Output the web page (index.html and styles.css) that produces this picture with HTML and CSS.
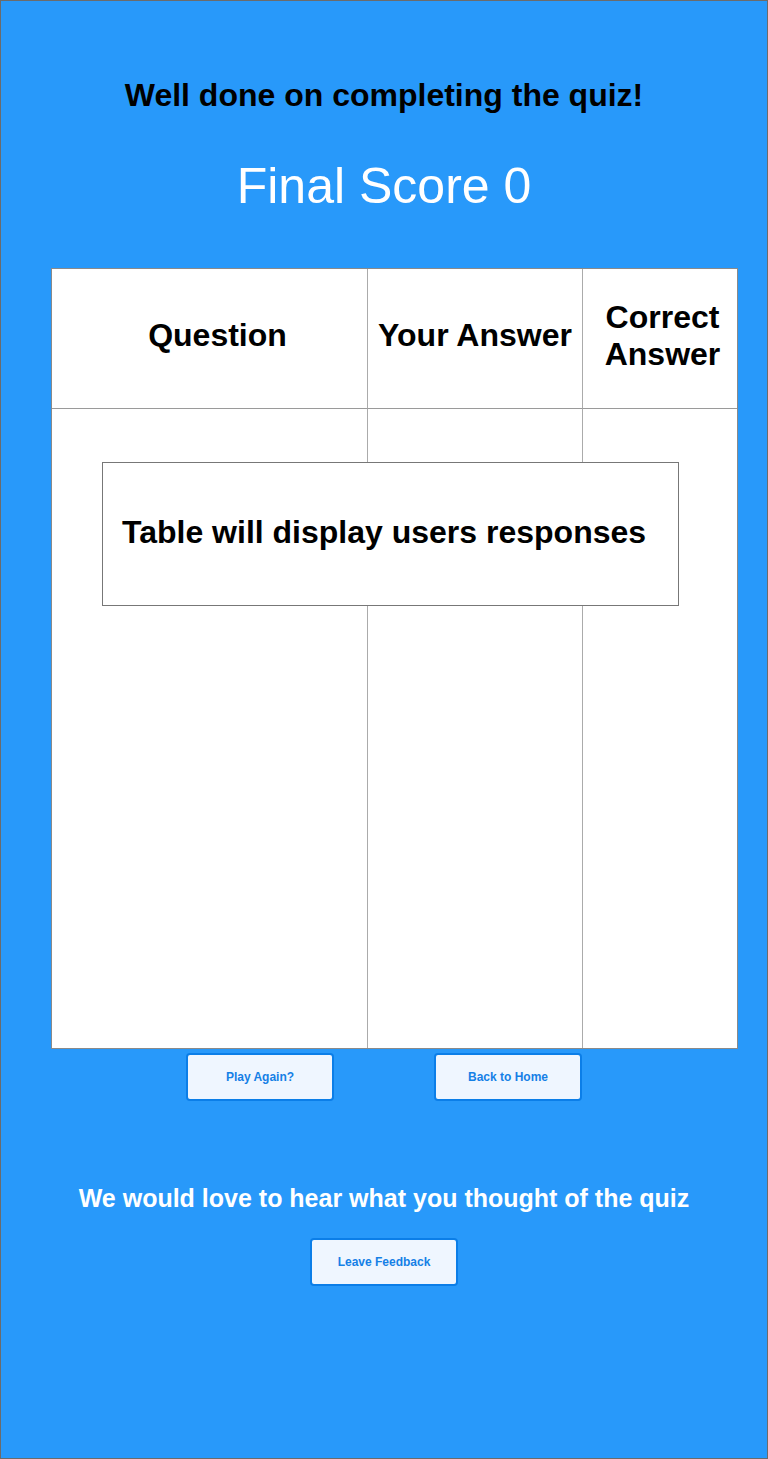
FILE: index.html
```html
<!DOCTYPE html>
<html>
<head>
    <title>Quiz Results</title>
    <link rel="stylesheet" href="styles.css">
</head>
<body>
    <div class="frame">
        <h1 class="title">Well done on completing the quiz!</h1>
        <h2 class="score">Final Score <span id="score">0</span></h2>

        <div class="results">
            <div class="cell head first">Question</div>
            <div class="cell head">Your Answer</div>
            <div class="cell head last">Correct<br>Answer</div>
            <div class="cell first"></div>
            <div class="cell"></div>
            <div class="cell"></div>

            <div class="placeholder">Table will display users responses</div>
        </div>

        <div class="actions">
            <button class="btn">Play Again?</button>
            <button class="btn">Back to Home</button>
        </div>

        <p class="feedback-text">We would love to hear what you thought of the quiz</p>
        <div class="actions">
            <button class="btn">Leave Feedback</button>
        </div>
    </div>
</body>
</html>
```

FILE: styles.css
```css
body { margin: 0; font-family: "Liberation Sans", Arial, sans-serif; }
.frame { height: 1459px; box-sizing: border-box; border: 1px solid #6b6b6b; background: #2899fa; padding-top: 76px; }
.title { margin: 0; font-size: 32px; line-height: 36px; font-weight: bold; text-align: center; color: #000; }
.score { margin: 45px 0 0; font-size: 50px; line-height: 56px; font-weight: normal; text-align: center; color: #fff; }

.results { position: relative; margin: 54px 0 0 50px; width: 687px; height: 781px; box-sizing: border-box; border: 1px solid #8a8a8a; background: #fff; display: grid; grid-template-columns: 315px 215px 155px; grid-template-rows: 140px 1fr; }
.cell { border-left: 1px solid #ababab; box-sizing: border-box; }
.cell.first { border-left: none; }
.head { border-bottom: 1px solid #9a9a9a; display: flex; align-items: center; justify-content: center; text-align: center; padding-bottom: 6px; font-size: 32px; line-height: 37px; font-weight: bold; color: #000; }
.head.first { padding-left: 16px; }
.head.last { padding-left: 5px; }

.placeholder { position: absolute; left: 50px; top: 193px; width: 577px; height: 144px; box-sizing: border-box; border: 1px solid #777; background: #fff; display: flex; align-items: center; padding: 0 0 4px 19px; font-size: 32px; font-weight: bold; color: #000; }

.actions { display: flex; justify-content: center; gap: 100px; margin-top: 4px; }
.btn { width: 148px; height: 48px; box-sizing: border-box; border: 2px solid #0b7ee8; border-radius: 4px; background: #eff6ff; color: #1580e6; font-family: "Liberation Sans", Arial, sans-serif; font-size: 12px; font-weight: bold; cursor: pointer; }
.feedback-text { margin: 82px 0 25px; font-size: 25px; line-height: 30px; font-weight: bold; text-align: center; color: #fff; }
.feedback-text + .actions { margin-top: 0; }
```
